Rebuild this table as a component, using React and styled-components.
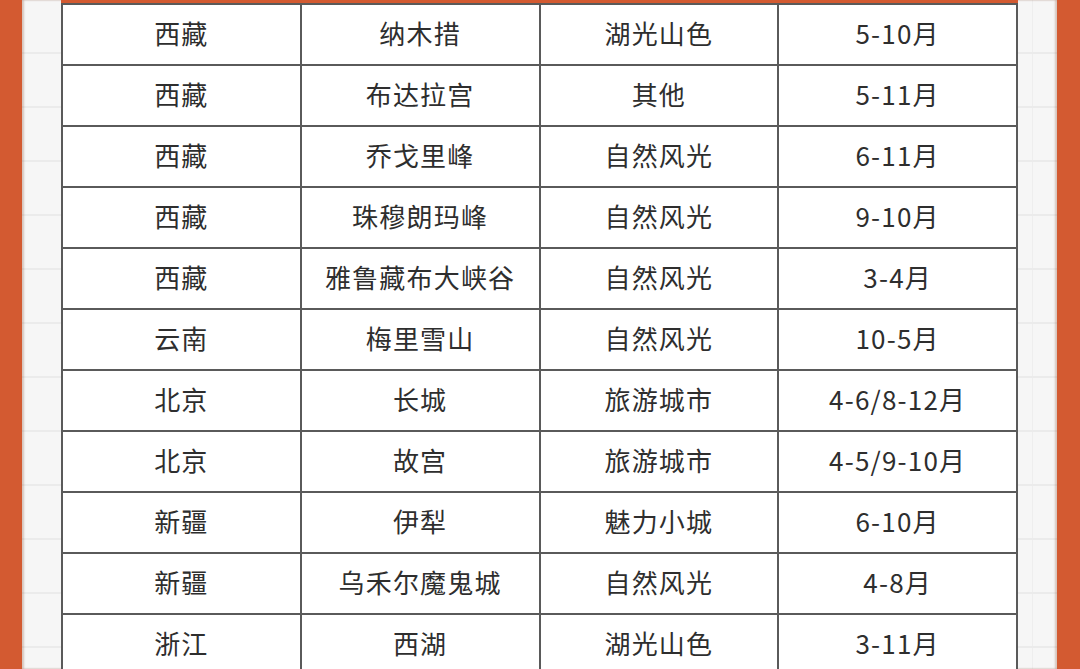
import React from 'react';
import styled, {createGlobalStyle} from 'styled-components';

const GlobalStyle = createGlobalStyle`
html, body {
margin: 0;
padding: 0;
height: 100%;
overflow: hidden;
}
body {
font-family: "Noto Sans CJK SC", "Noto Sans", sans-serif;
}
`;

const Page = styled.div`
display: flex;
width: 1080px;
height: 669px;
overflow: hidden;
background: #d35a31;
`;
const Edge = styled.div`
flex: 0 0 ${props => props.w}px;
background: #d35a31;
`;
const Paper = styled.div`
flex: 1;
display: flex;
background-color: #f6f6f6;
background-image:
  repeating-linear-gradient(to bottom, transparent 0, transparent 52px, #ebebeb 52px, #ebebeb 54px),
  linear-gradient(to right, transparent 0, transparent 1010px, #eeeeee 1010px, #eeeeee 1011px, transparent 1011px);
box-shadow: inset 2px 0 2px rgba(120, 50, 20, 0.25), inset -2px 0 2px rgba(120, 50, 20, 0.25);
padding: 0 39px;
`;
const Sheet = styled.div`
flex: 1;
display: flex;
flex-direction: column;
`;
const TopStrip = styled.div`
height: 3px;
flex: 0 0 3px;
background: #d35a31;
`;
const Grid = styled.div`
display: grid;
grid-template-columns: repeat(4, 1fr);
border-top: 2px solid #5a5a5a;
border-left: 2px solid #5a5a5a;
background: #fff;
`;
const Cell = styled.div`
height: 61px;
box-sizing: border-box;
padding-bottom: 4px;
display: flex;
align-items: center;
justify-content: center;
border-right: 2px solid #5a5a5a;
border-bottom: 2px solid #5a5a5a;
font-size: 26px;
color: #2e2e2e;
letter-spacing: 1.2px;
`;

const rows = [
    ['西藏', '纳木措', '湖光山色', '5-10月'],
    ['西藏', '布达拉宫', '其他', '5-11月'],
    ['西藏', '乔戈里峰', '自然风光', '6-11月'],
    ['西藏', '珠穆朗玛峰', '自然风光', '9-10月'],
    ['西藏', '雅鲁藏布大峡谷', '自然风光', '3-4月'],
    ['云南', '梅里雪山', '自然风光', '10-5月'],
    ['北京', '长城', '旅游城市', '4-6/8-12月'],
    ['北京', '故宫', '旅游城市', '4-5/9-10月'],
    ['新疆', '伊犁', '魅力小城', '6-10月'],
    ['新疆', '乌禾尔魔鬼城', '自然风光', '4-8月'],
    ['浙江', '西湖', '湖光山色', '3-11月'],
];

export default function App() {
    return <>
        <GlobalStyle/>
        <Page>
            <Edge w={22}/>
            <Paper>
                <Sheet>
                    <TopStrip/>
                    <Grid>
                        {rows.map((row, i) => row.map((text, j) => (
                            <Cell key={i + '-' + j}>{text}</Cell>
                        )))}
                    </Grid>
                </Sheet>
            </Paper>
            <Edge w={23}/>
        </Page>
    </>
}
